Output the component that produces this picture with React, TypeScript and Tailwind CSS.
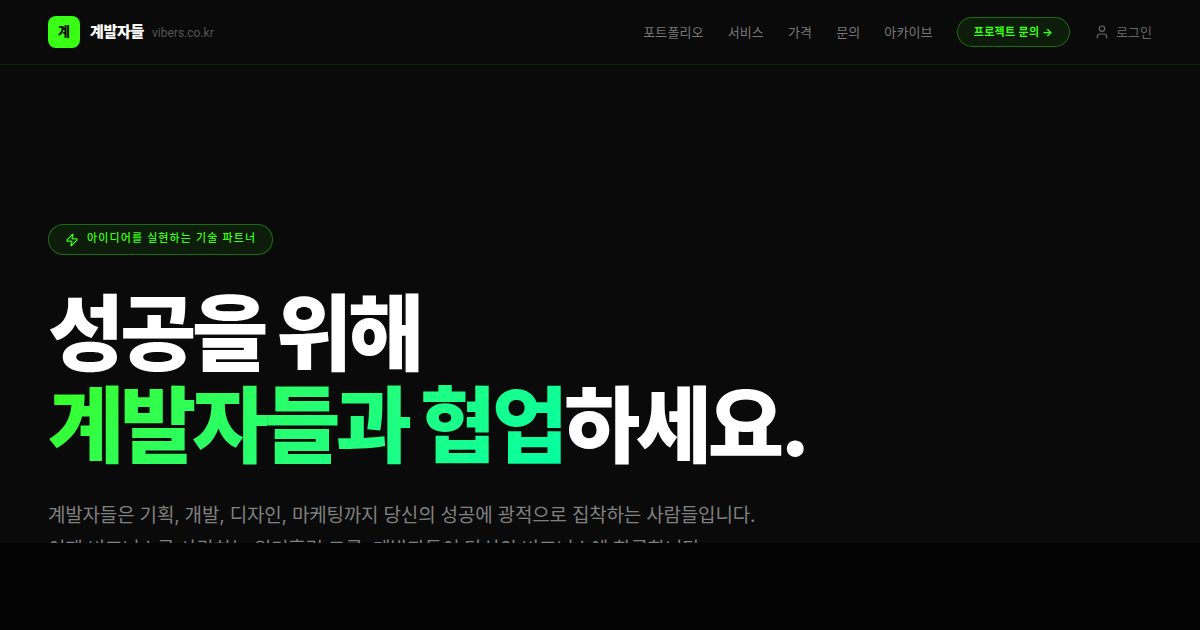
import { User, Zap } from 'lucide-react'

const links = [
  { label: '포트폴리오', href: '#portfolio' },
  { label: '서비스', href: '#services' },
  { label: '가격', href: '#pricing' },
  { label: '문의', href: '#contact' },
  { label: '아카이브', href: '#archive' },
]

const Header = () => {
  return (
    <header className="flex items-center justify-between h-[65px] shrink-0 px-12 border-b border-[#39ff14]/10">
      <a href="#top" className="flex items-center">
        <span className="flex items-center justify-center w-8 h-8 rounded-lg bg-[#39ff14] text-[#0a0a0a] text-[13px] font-black">계</span>
        <span className="ml-2.5 text-[15px] font-black tracking-[-0.02em] text-white">계발자들</span>
        <span className="ml-2 pt-0.5 font-[Roboto,sans-serif] text-xs text-[#555555]">vibers.co.kr</span>
      </a>
      <nav className="flex items-center gap-6 text-[13px] leading-5 tracking-[0.01em] text-[#777777]">
        {links.map((link) => (
          <a key={link.label} href={link.href}>{link.label}</a>
        ))}
        <a href="#contact" className="flex items-center h-[30px] px-4 rounded-full border border-[#39ff14]/35 bg-[#39ff14]/8 text-[11px] font-bold tracking-[0.03em] text-[#39ff14]">프로젝트 문의 →</a>
        <a href="#login" className="flex items-center gap-1.5 tracking-normal text-[#666666]">
          <User size={16} strokeWidth={1.8} />
          로그인
        </a>
      </nav>
    </header>
  )
}

const Hero = () => {
  return (
    <main className="flex-1 min-h-0 overflow-hidden px-12 pt-[159px]">
      <div className="inline-flex items-center gap-2 h-[31px] px-4 rounded-full border border-[#39ff14]/35 bg-[#39ff14]/8 text-[11px] font-medium tracking-widest text-[#39ff14]">
        <Zap size={14} strokeWidth={2} />
        <span className="pb-0.5">아이디어를 실현하는 기술 파트너</span>
      </div>
      <h1 className="mt-[33px] text-[83px] leading-[92px] font-black tracking-[-0.053em] text-white">
        성공을 위해
        <br />
        <span className="bg-linear-135 from-[#39ff14] to-[#00ffa3] bg-clip-text text-transparent">계발자들과 협업</span>하세요.
      </h1>
      <p className="mt-[27px] text-[19px] leading-[34px] tracking-[-0.01em] text-[#808080]">
        계발자들은 기획, 개발, 디자인, 마케팅까지 당신의 성공에 광적으로 집착하는 사람들입니다.
        <br />
        이제 비즈니스를 사랑하는 워커홀릭 그룹, 계발자들이 당신의 비즈니스에 합류합니다.
      </p>
    </main>
  )
}

export default function App() {
  return (
    <div className="flex flex-col h-screen bg-[#0a0a0a] font-[Inter,'Noto_Sans_CJK_KR',sans-serif]">
      <Header />
      <Hero />
      <div className="h-[87px] shrink-0 bg-[#040404]" />
    </div>
  )
}
